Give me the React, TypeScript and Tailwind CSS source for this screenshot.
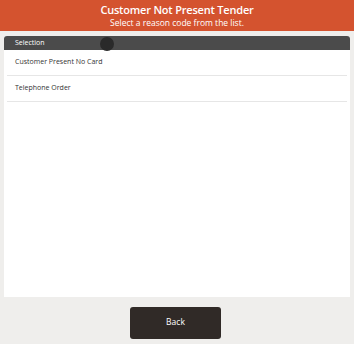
export default function App() {
  const reasons = ["Customer Present No Card", "Telephone Order"]

  return (
    <div
      className="flex h-[344px] w-[354px] flex-col bg-[#efeeec]"
      style={{ fontFamily: '"Open Sans", "Noto Sans", sans-serif' }}
    >
      {/* title bar */}
      <div className="flex h-[31px] flex-col items-center justify-center bg-[#d4532f] text-white">
        <div className="text-[11px] font-semibold leading-[14px] tracking-[-0.2px]">Customer Not Present Tender</div>
        <div className="text-[8.5px] font-medium leading-[11px]">Select a reason code from the list.</div>
      </div>

      {/* list panel */}
      <div className="mx-[4px] mt-[5px] flex h-[261px] flex-col overflow-hidden rounded-t-[3px] bg-white">
        <div className="relative flex h-[14px] items-center bg-[#4b4b4b] px-[11px] text-[7px] text-white">
          Selection
          <span className="absolute left-[96px] top-[1px] h-[14px] w-[14px] rounded-full bg-[#2a2a2a]" />
        </div>
        <div className="px-[3px]">
          {reasons.map((r) => (
            <div
              key={r}
              className="flex h-[26px] items-center border-b border-[#e6e6e6] px-[8px] text-[7px] text-[#333]"
            >
              {r}
            </div>
          ))}
        </div>
      </div>

      {/* footer */}
      <div className="flex flex-1 items-center justify-center">
        <button className="mr-[3px] mt-[4px] flex h-[32px] w-[91px] items-center justify-center rounded-[3px] bg-[#302a27] text-[8.5px] text-white">
          Back
        </button>
      </div>
    </div>
  )
}
